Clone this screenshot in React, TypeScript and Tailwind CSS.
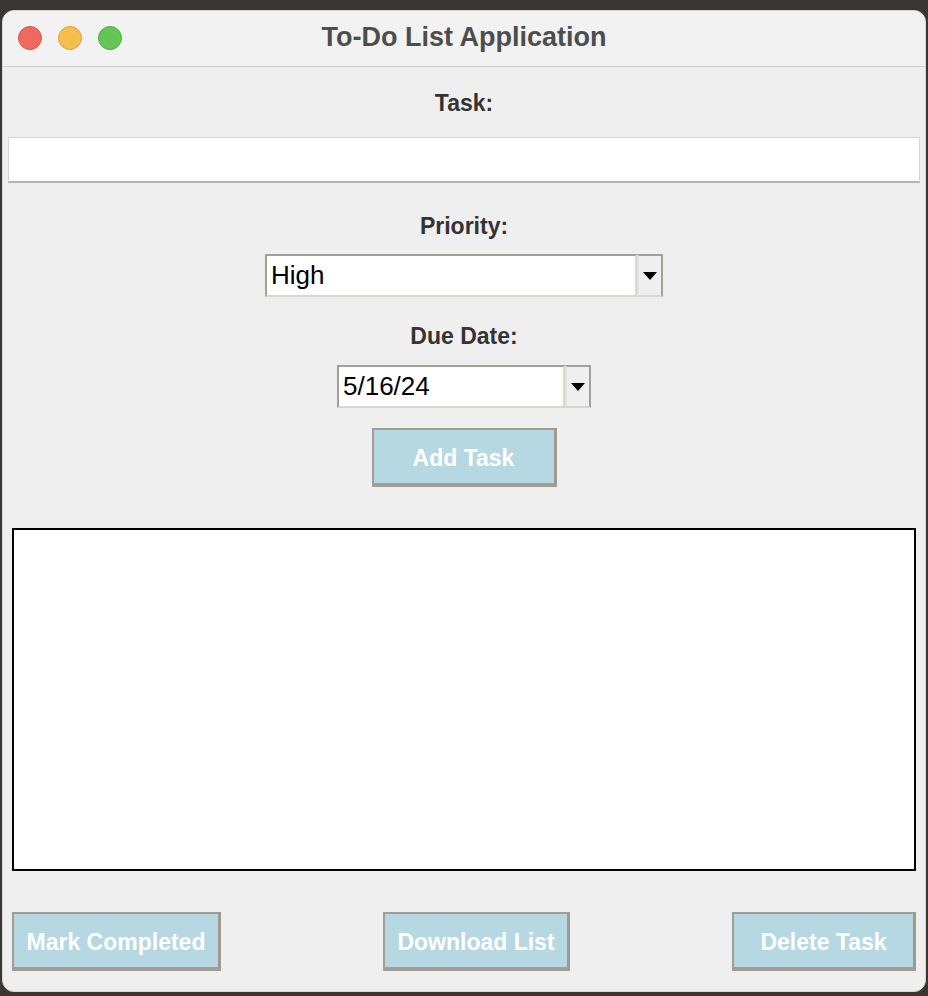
import React from 'react';

const font = { fontFamily: '"Liberation Sans", Arial, sans-serif' };

function Light({ color, ring }: { color: string; ring: string }) {
  return <div className={`w-[24px] h-[24px] rounded-full border ${color} ${ring}`} />;
}

function Arrow() {
  return (
    <svg width="14" height="8" viewBox="0 0 14 8">
      <path d="M0 0 L14 0 L7 8 Z" fill="#000" />
    </svg>
  );
}

function Combo({ value, width }: { value: string; width: string }) {
  return (
    <div className="flex h-[43px]">
      <div className={`${width} h-full bg-white border-2 border-t-[#a39e96] border-l-[#a39e96] border-b-[#d9d5cf] border-r-[#d9d5cf] flex items-center pl-[4px] text-[26px] text-black`}>
        {value}
      </div>
      <div className="w-[26px] h-full bg-[#efefef] border-2 border-t-[#a39e96] border-l-[#e4e1dc] border-b-[#d9d5cf] border-r-[#a39e96] flex items-center justify-center">
        <Arrow />
      </div>
    </div>
  );
}

function Btn({ label, cls }: { label: string; cls: string }) {
  return (
    <button className={`${cls} h-[59px] pt-[3px] bg-[#b6d8e3] border-2 border-t-[#a39e95] border-l-[#a39e95] border-r-[3px] border-r-[#9f998f] border-b-[4px] border-b-[#a39e95] text-white font-bold text-[23px] flex items-center justify-center`}>
      {label}
    </button>
  );
}

export default function App() {
  return (
    <div className="w-[928px] h-[996px] bg-[#3a3733] pt-[10px] pl-[2px] overflow-hidden" style={font}>
      <div className="w-[924px] h-[982px] bg-[#efefef] rounded-[12px] overflow-hidden flex flex-col border border-[#d6d6d6]">
        {/* title bar */}
        <div className="h-[56px] shrink-0 bg-[#f2f2f2] border-b border-[#d0d0d0] relative flex items-center justify-center">
          <div className="absolute left-[15px] top-[15px] flex gap-[16px]">
            <Light color="bg-[#ee6a5f]" ring="border-[#d5574c]" />
            <Light color="bg-[#f5bf4f]" ring="border-[#d9a43a]" />
            <Light color="bg-[#62c554]" ring="border-[#4fad43]" />
          </div>
          <span className="text-[27px] font-bold text-[#4d4d4d] mt-[-2px]">To-Do List Application</span>
        </div>

        <div className="flex flex-col items-center text-[#333]">
          <div className="mt-[22px] h-[28px] leading-[28px] text-[23px] font-bold">Task:</div>
          <div className="mt-[20px] self-stretch mx-[5px] h-[46px] bg-white border border-[#d4d4d4] border-b-2 border-b-[#b4b4b4]" />

          <div className="mt-[29px] h-[28px] leading-[28px] text-[23px] font-bold">Priority:</div>
          <div className="mt-[14px]">
            <Combo value="High" width="w-[372px]" />
          </div>

          <div className="mt-[25px] h-[28px] leading-[28px] text-[23px] font-bold">Due Date:</div>
          <div className="mt-[15px]">
            <Combo value="5/16/24" width="w-[228px]" />
          </div>

          <div className="mt-[20px]">
            <Btn label="Add Task" cls="w-[185px]" />
          </div>

          <div className="mt-[41px] self-stretch mx-[9px] h-[343px] bg-white border-2 border-black" />

          <div className="mt-[41px] self-stretch px-[9px] flex justify-between">
            <Btn label="Mark Completed" cls="w-[209px]" />
            <Btn label="Download List" cls="w-[187px]" />
            <Btn label="Delete Task" cls="w-[184px]" />
          </div>
        </div>
      </div>
    </div>
  );
}
